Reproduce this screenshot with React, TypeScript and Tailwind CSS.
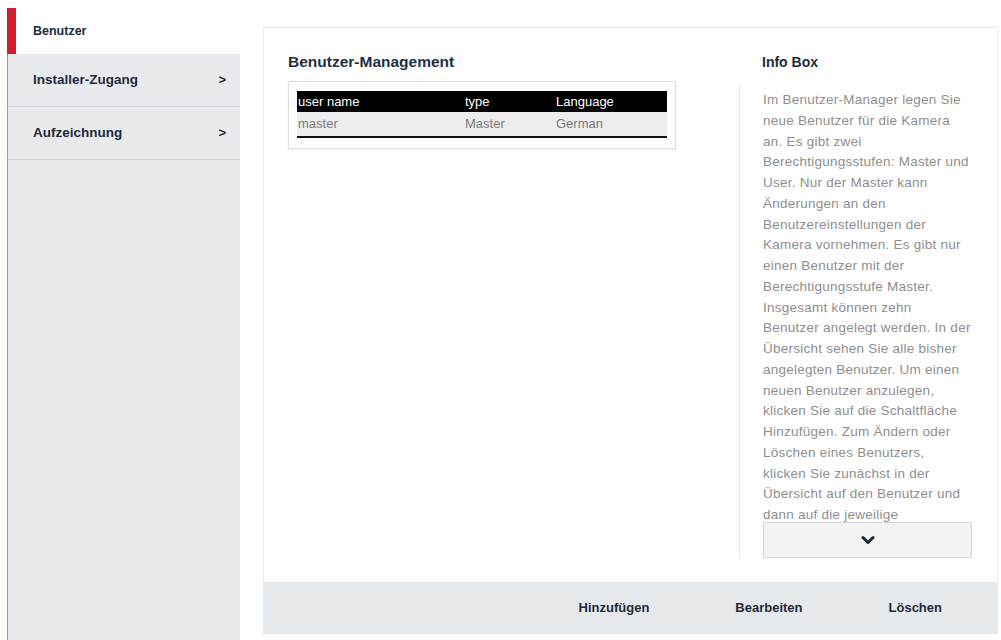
import React from 'react';

const INFO_LINES = [
  'Im Benutzer-Manager legen Sie',
  'neue Benutzer für die Kamera',
  'an. Es gibt zwei',
  'Berechtigungsstufen: Master und',
  'User. Nur der Master kann',
  'Änderungen an den',
  'Benutzereinstellungen der',
  'Kamera vornehmen. Es gibt nur',
  'einen Benutzer mit der',
  'Berechtigungsstufe Master.',
  'Insgesamt können zehn',
  'Benutzer angelegt werden. In der',
  'Übersicht sehen Sie alle bisher',
  'angelegten Benutzer. Um einen',
  'neuen Benutzer anzulegen,',
  'klicken Sie auf die Schaltfläche',
  'Hinzufügen. Zum Ändern oder',
  'Löschen eines Benutzers,',
  'klicken Sie zunächst in der',
  'Übersicht auf den Benutzer und',
  'dann auf die jeweilige',
];

const NAV = [
  { label: 'Installer-Zugang' },
  { label: 'Aufzeichnung' },
];

function Sidebar() {
  return (
    <aside className="ml-[7px] mt-[8px] flex w-[233px] shrink-0 flex-col">
      {/* aktiver Eintrag mit rotem Balken */}
      <div className="flex h-[46px] items-center border-l-[9px] border-[#d21f2f] bg-white pl-[17px]">
        <span className="text-[12.5px] font-bold text-[#1e2b3a]">Benutzer</span>
      </div>
      {NAV.map((n) => (
        <div
          key={n.label}
          className="flex h-[53px] items-center justify-between border-b border-l border-b-[#d3d6da] border-l-[#9a9a9a] bg-[#e8eaed] pl-[25px] pr-[14px]"
        >
          <span className="text-[13.5px] font-bold text-[#1e2b3a]">{n.label}</span>
          <span className="text-[13px] font-bold text-[#1e2b3a]">&gt;</span>
        </div>
      ))}
      <div className="flex-1 border-l border-[#9a9a9a] bg-[#e8eaed]" />
    </aside>
  );
}

function UserTable() {
  return (
    <div className="w-[388px] border border-[#dcdcdc] px-[8px] pb-[10px] pt-[9px] shadow-[0_1px_2px_rgba(0,0,0,0.06)]">
      <div className="flex h-[21px] items-center bg-black text-[13px] text-white">
        <span className="w-[168px] pl-[1px]">user name</span>
        <span className="w-[91px]">type</span>
        <span>Language</span>
      </div>
      <div className="flex h-[26px] items-center border-b-2 border-[#111] bg-[#ededed] text-[13px] text-[#7a7a7a]">
        <span className="w-[168px] pl-[1px]">master</span>
        <span className="w-[91px]">Master</span>
        <span>German</span>
      </div>
    </div>
  );
}

function InfoBox() {
  return (
    <div className="flex w-[258px] shrink-0 flex-col">
      <h2 className="pl-[23px] text-[14px] font-bold leading-[20px] text-[#1e2b3a]">Info Box</h2>
      <div className="mt-[13px] flex flex-col border-l border-[#e6e6e6] pl-[23px]">
        <div className="h-[437px] shrink-0 overflow-hidden pt-[5px]">
          {INFO_LINES.map((l) => (
            <div
              key={l}
              className="whitespace-nowrap text-[13.5px] leading-[20.75px] tracking-[0.25px] text-[#8e8e8e]"
            >
              {l}
            </div>
          ))}
        </div>
        <button
          type="button"
          className="flex h-[36px] w-[209px] shrink-0 items-center justify-center border border-[#d6d6d6] bg-[#f3f3f3]"
        >
          <svg width="14" height="10" viewBox="0 0 14 10" fill="none" aria-hidden>
            <path d="M2 2.5l5 5 5-5" stroke="#1b2a3b" strokeWidth="3" strokeLinecap="round" strokeLinejoin="round" />
          </svg>
        </button>
      </div>
    </div>
  );
}

export default function App() {
  return (
    <div
      className="flex h-[640px] w-[1001px] overflow-hidden bg-white"
      style={{ fontFamily: '"Liberation Sans", Arial, sans-serif' }}
    >
      <Sidebar />
      <main className="ml-[23px] mt-[27px] flex w-[735px] flex-col">
        <div className="flex h-[555px] border border-b-0 border-[#ececec] pt-[24px]">
          <section className="flex flex-1 flex-col pl-[24px]">
            <h1 className="text-[15.5px] font-bold leading-[20px] text-[#1e2f40]">Benutzer-Management</h1>
            <div className="mt-[9px]">
              <UserTable />
            </div>
          </section>
          <InfoBox />
        </div>
        <footer className="flex h-[52px] shrink-0 items-center justify-end gap-[86px] bg-[#e6e9eb] pr-[56px] text-[13px] font-bold text-[#1e2b3a]">
          <button type="button">Hinzufügen</button>
          <button type="button">Bearbeiten</button>
          <button type="button">Löschen</button>
        </footer>
      </main>
    </div>
  );
}
